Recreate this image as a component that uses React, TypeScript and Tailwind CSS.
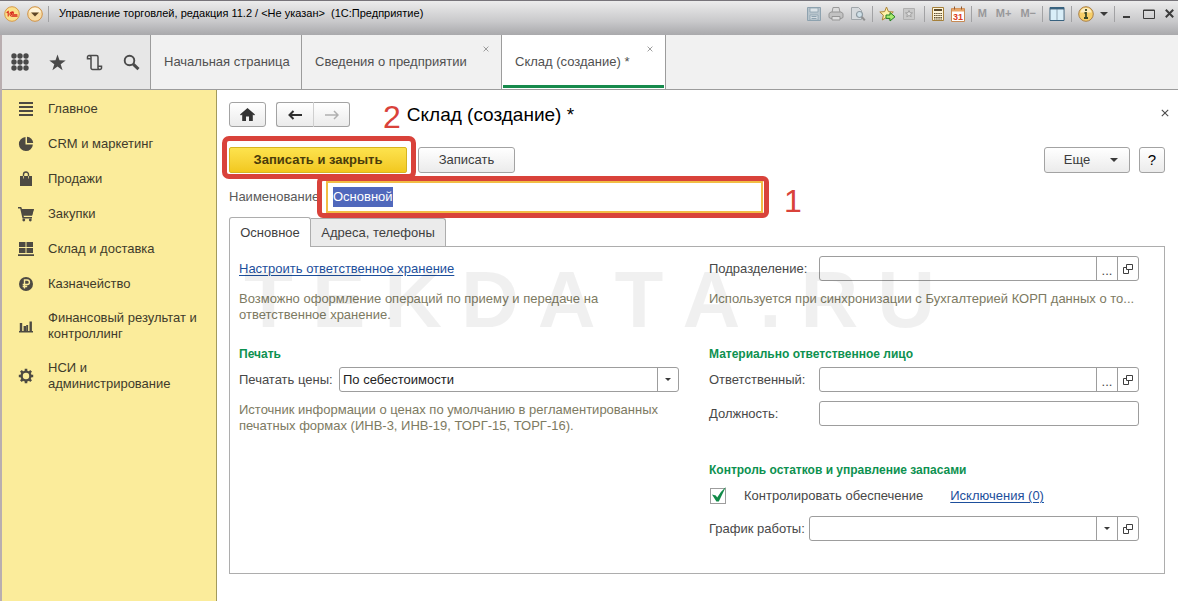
import { useEffect, useRef, type ReactNode } from "react";

/* ---------- title bar icons ---------- */

const LogoIcon = () => (
  <svg width="16" height="16" viewBox="0 0 16 16" aria-hidden="true">
    <circle cx="8" cy="8" r="7.3" fill="#fbe08a" stroke="#d79a4a" />
    <path d="M2.6 6.800 4.200 5.600v5M9.800 6.700A2.200 2.200 0 1 0 8.400 10.300h5.200M9.400 8a1 1 0 1 0-.9 .9h4.900" fill="none" stroke="#d8261c" strokeWidth="1.100" />
  </svg>
);

const MenuCircleIcon = () => (
  <svg width="16" height="16" viewBox="0 0 16 16" aria-hidden="true">
    <circle cx="8" cy="8" r="7.3" fill="#f9dca4" stroke="#cf9247" />
    <path d="M2 6.500a6.200 6.200 0 0 1 12 0z" fill="#fff3d8" />
    <path d="M4 6.500h8L8 10.500z" fill="#5d4526" />
  </svg>
);

const SaveIcon = () => (
  <svg width="16" height="16" viewBox="0 0 16 16" aria-hidden="true">
    <path d="M1.500 1.500h13v13h-13z" fill="#b7c4cc" stroke="#8ea2af" />
    <path d="M4 2h8v4H4z" fill="#dce3e7" stroke="#8ea2af" strokeWidth=".8" />
    <path d="M4 9h8v5H4z" fill="#d4dce1" stroke="#8ea2af" strokeWidth=".8" />
    <path d="M5.500 10.500h5M5.500 12.500h5" stroke="#8ea2af" />
  </svg>
);

const PrinterIcon = () => (
  <svg width="16" height="16" viewBox="0 0 16 16" aria-hidden="true">
    <path d="M4 6.500 5 1.500h6l1 5" fill="#dcdcdc" stroke="#9a9a9a" />
    <path d="M1 7.500 3 6h10l2 1.500v4l-2 1H3l-2-1z" fill="#c2c2c2" stroke="#959595" />
    <path d="M4 10.500h8v3.500H4z" fill="#dedede" stroke="#959595" />
  </svg>
);

const PreviewIcon = () => (
  <svg width="16" height="16" viewBox="0 0 16 16" aria-hidden="true">
    <path d="M1.500 1.500h7l3 3v9h-10z" fill="#d6dadd" stroke="#a0a6aa" />
    <circle cx="9.500" cy="8.500" r="3" fill="#cfe0e8" stroke="#8f9ba3" strokeWidth="1.200" />
    <path d="m11.800 10.800 3 3.600" stroke="#8f8f8f" strokeWidth="2" />
  </svg>
);

const StarGoIcon = () => (
  <svg width="17" height="16" viewBox="0 0 17 16" aria-hidden="true">
    <path d="m7.500 1 1.900 4.600 4.900.4-3.700 3.200 1.200 4.800-4.300-2.600-4.200 2.600 1.100-4.800L.8 6l4.900-.4z" fill="#fff1a8" stroke="#ad8435" />
    <path d="M7 9h4V6.500l5 4.300-5 4.200v-2.600H7z" fill="#a9ec6e" stroke="#247e25" />
  </svg>
);

const LinkDimIcon = () => (
  <svg width="14" height="16" viewBox="0 0 14 16" aria-hidden="true">
    <path d="M1.500 2.500h11v11h-11z" fill="#c9c9c9" stroke="#b0b0b0" />
    <path d="m7 4.500 1 2.200 2.500.2-1.900 1.500.6 2.400L7 9.500l-2.200 1.300.6-2.400-1.900-1.500 2.500-.2z" fill="#ddd" stroke="#a2a2a2" />
  </svg>
);

const CalculatorIcon = () => (
  <svg width="14" height="16" viewBox="0 0 14 16" aria-hidden="true">
    <path d="M1.500 1.500h11v13h-11z" fill="#fff5d8" stroke="#a5803b" />
    <path d="M3 4h8" stroke="#5a4a2c" strokeWidth="2" />
    <path d="M3 7.500h8M3 9.500h8M3 11.500h8M3 13h8" stroke="#5a4a2c" strokeDasharray="1.500 .65" />
  </svg>
);

const CalendarIcon = () => (
  <svg width="14" height="16" viewBox="0 0 14 16" aria-hidden="true">
    <path d="M.5 2.500h13v13H.5z" fill="#fff" stroke="#c78a54" />
    <path d="M1 2.500h12v3H1z" fill="#e9a567" />
    <path d="M3.500.5v3M10.500.5v3" stroke="#8f5a33" />
    <text x="7" y="14" textAnchor="middle" fontSize="9" fontWeight="700" fontFamily="Liberation Sans, sans-serif" fill="#dd3b21">31</text>
  </svg>
);

const PanelsIcon = () => (
  <svg width="16" height="16" viewBox="0 0 16 16" aria-hidden="true">
    <path d="M1 1.500h14v13H1z" fill="#fff" stroke="#38627f" />
    <path d="M1 2.500h14" stroke="#38627f" strokeWidth="2" />
    <path d="M2 4h5v10H2zM9 4h5v10H9z" fill="#d9eef8" />
    <path d="M8 3v11" stroke="#6b93ab" />
  </svg>
);

const InfoIcon = () => (
  <svg width="16" height="16" viewBox="0 0 16 16" aria-hidden="true">
    <circle cx="8" cy="8" r="7.300" fill="#f7cf6a" stroke="#a9804a" />
    <path d="M2.200 6.500a6 6 0 0 1 11.600 0z" fill="#fdedc0" />
    <path d="M8 3v2M6.500 7H8v5M6 12h4" stroke="#3c4a2a" strokeWidth="1.800" fill="none" />
  </svg>
);

/* ---------- section icons ---------- */

const ink = "#4d4a42";

const sectionIcons = {
  list: <path d="M1 2h14M1 6h14M1 10h14M1 14h14" stroke={ink} strokeWidth="2" />,
  pie: (
    <g fill={ink}>
      <path d="M7.500 1.100A7 7 0 1 0 14.900 8.500H7.500z" />
      <path d="M9 .8A6.500 6.500 0 0 1 15.200 7H9z" />
    </g>
  ),
  bag: (
    <g>
      <path d="M2 5h12v10H2z" fill={ink} />
      <path d="M5.500 7V3.500a2.500 2.500 0 0 1 5 0V7" fill="none" stroke={ink} strokeWidth="1.400" />
      <path d="M5.500 5v2.500M10.500 5v2.500" stroke="#fbec9b" strokeWidth=".7" />
    </g>
  ),
  cart: (
    <g>
      <path d="M0 1h3.200l.8 2h12l-1.800 6.500H5.400L6 11h8v1.600H4.500L2.200 2.600H0z" fill={ink} />
      <path d="M3.500 3h12.200L14 9.500H5z" fill={ink} />
      <circle cx="5.800" cy="14" r="1.400" fill={ink} />
      <circle cx="12.300" cy="14" r="1.400" fill={ink} />
    </g>
  ),
  boxes: <path d="M1 1h6.500v5H1zM8.500 1H15v5H8.500zM1 7h6.500v5H1zM8.500 7H15v5H8.500zM0 13.200h16V15H0z" fill={ink} />,
  ruble: (
    <g>
      <circle cx="8" cy="8" r="7" fill={ink} />
      <path d="M6.500 12.500V4h2.700a2.200 2.200 0 0 1 0 4.500H4.700M4.700 10.500h4.500" fill="none" stroke="#fbec9b" strokeWidth="1.400" />
    </g>
  ),
  bars: <path d="M1 13h14v1.500H1zM1.800 5h2.400v8H1.800zM5.600 8h2.400v5H5.600zM8.200 7h1.900v6H8.200zM11.500 3.500h2.400V13h-2.400z" fill={ink} />,
  gear: (
    <g fill="none" stroke={ink}>
      <circle cx="8" cy="8" r="4.400" strokeWidth="2.400" />
      <path d="M8 .8v2.400M8 12.800v2.400M.8 8h2.400M12.800 8h2.400M2.900 2.900l1.700 1.700M11.400 11.400l1.700 1.700M2.900 13.100l1.700-1.700M11.400 4.600l1.700-1.700" strokeWidth="2.600" />
    </g>
  ),
};

const sections: { icon: keyof typeof sectionIcons; label: string }[] = [
  { icon: "list", label: "Главное" },
  { icon: "pie", label: "CRM и маркетинг" },
  { icon: "bag", label: "Продажи" },
  { icon: "cart", label: "Закупки" },
  { icon: "boxes", label: "Склад и доставка" },
  { icon: "ruble", label: "Казначейство" },
  { icon: "bars", label: "Финансовый результат и контроллинг" },
  { icon: "gear", label: "НСИ и администрирование" },
];

/* ---------- small parts ---------- */

const Divider = () => <span className="h-4 w-px bg-[#a2a2a4]" />;

const Cross = ({ size }: { size: number }) => (
  <svg width={size} height={size} viewBox="0 0 8 8" aria-hidden="true">
    <path d="m.8.8 6.400 6.400M7.200.8.8 7.200" stroke="currentColor" strokeWidth="1.100" />
  </svg>
);

const Caret = ({ width }: { width: number }) => (
  <svg width={width} height={width / 2} viewBox="0 0 8 4" aria-hidden="true">
    <path d="M0 0h8L4 4z" fill="#3a3a3a" />
  </svg>
);

const OpenIcon = () => (
  <svg width="10" height="10" viewBox="0 0 10 10" aria-hidden="true">
    <path d="M3.500.5h6v5h-6zM3.500 3.500h-3v6h5v-4" fill="none" stroke="#3f3f3f" />
  </svg>
);

const plainButton =
  "flex items-center justify-center rounded-[3px] border border-[#a3a3a3] bg-linear-to-b from-white to-[#ebebeb] text-[#3c3c3c]";
const fieldBox = "flex h-[25px] min-w-0 flex-1 items-stretch overflow-hidden rounded-[3px] border border-[#9d9d9d] bg-white";
const fieldButton = "flex w-[21px] shrink-0 items-center justify-center border-l border-[#9d9d9d]";
const hint = "leading-4 text-[#7d7a62]";

function Field({ id, label, labelClass, children }: { id: string; label: string; labelClass: string; children?: ReactNode }) {
  return (
    <div className="flex items-center">
      <label htmlFor={id} className={labelClass}>
        {label}
      </label>
      <div className={fieldBox}>
        <input id={id} type="text" className="min-w-0 flex-1 px-1 outline-none" />
        {children}
      </div>
    </div>
  );
}

const PickButton = () => (
  <button type="button" aria-label="Выбрать" className={fieldButton + " pt-1"}>
    ...
  </button>
);

const OpenButton = () => (
  <button type="button" aria-label="Открыть" className={fieldButton}>
    <OpenIcon />
  </button>
);

const GroupTitle = ({ children }: { children: ReactNode }) => (
  <h2 className="text-[12px] leading-4 font-bold text-[#0d9150]">{children}</h2>
);

/* ---------- page regions ---------- */

function TitleBar() {
  return (
    <header className="flex h-[35px] items-start border-t border-[#77747a] bg-linear-to-b from-[#ececec] via-[#c9c9cb] via-60% to-[#a9a9ac] px-1 pt-1">
      <div className="flex h-[17px] flex-1 items-center">
        <LogoIcon />
        <span className="w-[7px]" />
        <MenuCircleIcon />
        <span className="w-[5px]" />
        <Divider />
        <h1 className="ml-[10px] text-[11px] whitespace-pre text-black">
          {"Управление торговлей, редакция 11.2 / <Не указан>  (1С:Предприятие)"}
        </h1>
      </div>
      <div className="flex h-[17px] items-center text-[11px] font-bold text-[#98989a]">
        <div className="flex items-center gap-[6px]">
          <SaveIcon />
          <PrinterIcon />
          <PreviewIcon />
          <Divider />
          <StarGoIcon />
          <LinkDimIcon />
        </div>
        <div className="ml-2 flex items-center gap-[6px]">
          <Divider />
          <CalculatorIcon />
          <CalendarIcon />
          <Divider />
        </div>
        <div className="ml-[6px] flex items-center gap-[9px]">
          <span>M</span>
          <span>M+</span>
          <span>M−</span>
        </div>
        <div className="ml-[6px] flex items-center gap-[6px]">
          <Divider />
          <PanelsIcon />
          <Divider />
          <InfoIcon />
          <Caret width={8} />
          <Divider />
        </div>
        <div className="ml-2 flex items-center text-[#3b3b3b]">
          <button type="button" aria-label="Свернуть">
            <svg width="8" height="10" viewBox="0 0 8 10"><path d="M0 8h7" stroke="currentColor" strokeWidth="2" /></svg>
          </button>
          <button type="button" aria-label="Развернуть" className="ml-3">
            <svg width="12" height="10" viewBox="0 0 12 10"><path d="M.5 1h11v8.500H.5zM.5 1.500h11" fill="none" stroke="currentColor" /></svg>
          </button>
          <button type="button" aria-label="Закрыть" className="ml-[10px]">
            <svg width="9" height="9" viewBox="0 0 9 9"><path d="m.8.8 7.400 7.400M8.200.8.8 8.200" stroke="currentColor" strokeWidth="2" /></svg>
          </button>
        </div>
      </div>
    </header>
  );
}

function TabBar() {
  return (
    <nav className="flex h-[55px] items-stretch border-b border-[#9c9c9c] bg-[#f1f1f1] text-[#505050]">
      <div className="flex w-[149px] items-center border-r border-[#9c9c9c] bg-[#e7e7e7] pl-[9px] text-[#4a4a4a]">
        <button type="button" aria-label="Меню">
          <svg width="18" height="18" viewBox="0 0 18 18" fill="currentColor">
            {[3, 9, 15].map((y) => [3, 9, 15].map((x) => <circle key={x + "-" + y} cx={x} cy={y} r="2.700" />))}
          </svg>
        </button>
        <button type="button" aria-label="Избранное" className="ml-5">
          <svg width="17" height="17" viewBox="0 0 17 17" fill="currentColor">
            <path d="m8.500.5 2 5.800 6.200.1-5 3.800 1.900 6-5.100-3.600-5.100 3.600 1.900-6-5-3.800 6.200-.1z" />
          </svg>
        </button>
        <button type="button" aria-label="История" className="ml-5">
          <svg width="17" height="17" viewBox="0 0 17 17" fill="none" stroke="currentColor" strokeWidth="1.500">
            <path d="M4.200 4.800H1.500V3a1.500 1.500 0 0 1 1.500-1.500h7.500a1.500 1.500 0 0 1 1.500 1.500v9.200h3.500V14a1.500 1.500 0 0 1-1.500 1.500H6.500A1.500 1.500 0 0 1 5 14V3a1.300 1.300 0 0 0-2-1M12 12.200V14a1.500 1.500 0 0 0 1.500 1.500" />
          </svg>
        </button>
        <button type="button" aria-label="Поиск" className="ml-5">
          <svg width="17" height="17" viewBox="0 0 17 17" fill="none" stroke="currentColor">
            <circle cx="6.500" cy="6.500" r="4.800" strokeWidth="1.900" />
            <path d="m10.200 10.200 5.300 5" strokeWidth="3" />
          </svg>
        </button>
      </div>
      <div className="flex w-[151px] items-center border-r border-[#9c9c9c] pl-[13px]">
        <a href="#home">Начальная страница</a>
      </div>
      <div className="relative flex w-[200px] items-center border-r border-[#9c9c9c] pl-[13px]">
        <a href="#company">Сведения о предприятии</a>
        <button type="button" aria-label="Закрыть вкладку" className="absolute top-[11px] right-3 text-[#8b8b8b]">
          <Cross size={6} />
        </button>
      </div>
      <div className="relative flex w-[164px] items-center border-r border-[#9c9c9c] bg-white pl-[13px]">
        <a href="#warehouse" aria-current="page">Склад (создание) *</a>
        <button type="button" aria-label="Закрыть вкладку" className="absolute top-[11px] right-3 text-[#8b8b8b]">
          <Cross size={6} />
        </button>
        <span className="absolute inset-x-px bottom-px h-[3px] bg-[#178a4c]" />
      </div>
    </nav>
  );
}

function Sidebar() {
  return (
    <aside className="w-[215px] shrink-0 border-r border-[#a39a5c] bg-[#fbec9b] pt-px">
      <ul>
        {sections.map((s) => (
          <li key={s.icon}>
            <a href={"#" + s.icon} className="flex min-h-[35px] items-center py-[9px] pr-4 pl-4 leading-4 text-[#3f3b2b]">
              <svg width="16" height="16" viewBox="0 0 16 16" className="mr-[14px] shrink-0" aria-hidden="true">
                {sectionIcons[s.icon]}
              </svg>
              <span>{s.label}</span>
            </a>
          </li>
        ))}
      </ul>
    </aside>
  );
}

function Watermark() {
  return (
    <div
      aria-hidden="true"
      className="pointer-events-none absolute top-4 left-[14px] flex gap-[19px] text-[80px] leading-[74px] font-bold text-black/6"
    >
      {Array.from("TEKDATA.RU").map((c, i) => (
        <span key={i}>{c}</span>
      ))}
    </div>
  );
}

function MainPanel() {
  return (
    <section className="relative grid grid-cols-[440fr_430fr] gap-x-[30px] border border-[#adadad] pt-[9px] pr-[25px] pb-8 pl-[9px] text-[#484848]">
      <div className="min-w-0">
        <div className="flex h-[25px] items-center">
          <a href="#storage" className="text-[#1d4f9c] underline underline-offset-2">Настроить ответственное хранение</a>
        </div>
        <p className={"mt-[10px] min-h-8 max-w-[380px] " + hint}>
          Возможно оформление операций по приему и передаче на ответственное хранение.
        </p>
        <div className="mt-[23px] flex flex-col gap-[5px]">
          <GroupTitle>Печать</GroupTitle>
          <div className="flex items-center">
            <label htmlFor="price" className="w-[100px] shrink-0">Печатать цены:</label>
            <div className={fieldBox + " relative"}>
              <select id="price" className="min-w-0 flex-1 appearance-none px-[3px] text-[#222] outline-none">
                <option>По себестоимости</option>
              </select>
              <span className="pointer-events-none absolute inset-y-0 right-0 flex w-[21px] items-center justify-center border-l border-[#9d9d9d]">
                <Caret width={6} />
              </span>
            </div>
          </div>
        </div>
        <p className={"mt-[10px] " + hint}>
          Источник информации о ценах по умолчанию в регламентированных печатных формах (ИНВ-3, ИНВ-19, ТОРГ-15, ТОРГ-16).
        </p>
      </div>

      <div className="min-w-0">
        <Field id="division" label="Подразделение:" labelClass="w-[110px] shrink-0">
          <PickButton />
          <OpenButton />
        </Field>
        <div className={"mt-[10px] min-h-8 " + hint}>
          <p>Используется при синхронизации с Бухгалтерией КОРП данных о то...</p>
        </div>
        <div className="mt-[23px] flex flex-col gap-[5px]">
          <GroupTitle>Материально ответственное лицо</GroupTitle>
          <Field id="responsible" label="Ответственный:" labelClass="w-[110px] shrink-0">
            <PickButton />
            <OpenButton />
          </Field>
        </div>
        <div className="mt-[9px]">
          <Field id="position" label="Должность:" labelClass="w-[110px] shrink-0" />
        </div>
        <div className="mt-9 flex flex-col gap-[5px]">
          <GroupTitle>Контроль остатков и управление запасами</GroupTitle>
          <div className="flex h-[25px] items-center">
            <label className="relative flex items-center gap-[18px] pl-px">
              <input type="checkbox" defaultChecked className="peer size-4 appearance-none border border-[#9d9d9d] bg-white" />
              <svg width="16" height="16" viewBox="0 0 16 16" className="pointer-events-none absolute left-px hidden overflow-visible peer-checked:block" aria-hidden="true">
                <path d="M2 6.500 5.800 7.600 7.200 9.600Q10.500 3.500 15.800-1L8.800 13.400H6.400z" fill="#118a48" />
              </svg>
              Контролировать обеспечение
            </label>
            <a href="#exceptions" className="ml-[27px] text-[#1d4f9c] underline underline-offset-2">Исключения (0)</a>
          </div>
        </div>
        <div className="mt-2">
          <Field id="schedule" label="График работы:" labelClass="w-[100px] shrink-0">
            <button type="button" aria-label="Показать список" className={fieldButton}>
              <Caret width={6} />
            </button>
            <OpenButton />
          </Field>
        </div>
      </div>
      <Watermark />
    </section>
  );
}

function WarehouseForm() {
  const nameRef = useRef<HTMLInputElement>(null);
  useEffect(() => {
    nameRef.current?.focus();
    nameRef.current?.select();
  }, []);

  return (
    <main className="min-w-0 flex-1 bg-white pt-3 pr-[13px] pb-[27px] pl-3">
      <div className="flex h-[25px] items-center">
        <button type="button" aria-label="Домой" className={plainButton + " h-full w-[37px]"}>
          <svg width="15" height="13" viewBox="0 0 15 13"><path d="M7.500 0 15 6.500 14 7.500 12.800 6.500V13H9V8.500H6V13H2.200V6.500L1 7.500 0 6.500z" fill="#333" /></svg>
        </button>
        <div className="ml-[10px] flex h-full">
          <button type="button" aria-label="Назад" className={plainButton + " w-[38px] rounded-r-none border-r-[#cfcfcf]"}>
            <svg width="14" height="10" viewBox="0 0 14 10"><path d="M14 5H2M5.500 1 1.500 5l4 4" fill="none" stroke="#2f2f2f" strokeWidth="2" /></svg>
          </button>
          <button type="button" aria-label="Вперед" className={plainButton + " w-9 rounded-l-none border-l-0"}>
            <svg width="14" height="10" viewBox="0 0 14 10"><path d="M0 5h12M9 1l4 4-4 4" fill="none" stroke="#b0b0b0" strokeWidth="1.500" /></svg>
          </button>
        </div>
        <span className="ml-[33px] pt-1 text-[32px] leading-none text-[#d9423a]">2</span>
        <h2 className="ml-[6px] pt-px text-[19px] text-black">Склад (создание) *</h2>
        <button type="button" aria-label="Закрыть форму" className="mr-[-4px] mb-1 ml-auto text-[#4a4a4a]">
          <Cross size={8} />
        </button>
      </div>

      <div className="mt-5 flex h-[26px] items-stretch">
        <div className="relative flex">
          <button type="button" className="w-[178px] rounded-[2px] border border-[#d6b520] bg-linear-to-b from-[#fde34d] to-[#f2c81d] font-bold text-[#4a3c0a]">
            Записать и закрыть
          </button>
          <span className="pointer-events-none absolute -top-[11px] -right-[9px] -bottom-[6px] -left-[7px] rounded-[7px] border-5 border-[#d9423a]" />
        </div>
        <button type="button" className={plainButton + " ml-[11px] w-[97px]"}>Записать</button>
        <button type="button" className={plainButton + " ml-auto w-[86px] pl-2"}>
          <span>Еще</span>
          <span className="ml-5"><Caret width={8} /></span>
        </button>
        <button type="button" aria-label="Справка" className={plainButton + " ml-[9px] w-[26px] text-[15px] text-black"}>?</button>
      </div>

      <div className="mt-2 flex h-8 items-center">
        <label htmlFor="name" className="w-[97px] shrink-0 text-[#5a5a5a]">Наименование:</label>
        <div className="relative flex w-[437px] self-stretch">
          <input
            id="name"
            ref={nameRef}
            type="text"
            defaultValue="Основной"
            className="min-w-0 flex-1 border-2 border-[#f2bd45] bg-white px-[5px] outline-none selection:bg-[#5068bc] selection:text-white"
          />
          <span className="pointer-events-none absolute -top-[5px] -right-[6px] -bottom-[5px] -left-[9px] rounded-[6px] border-5 border-[#d9423a]" />
        </div>
        <span className="ml-[21px] pt-2 text-[32px] leading-none text-[#d9423a]">1</span>
      </div>

      <div className="mt-1 flex items-end text-[#3f3f3f]">
        <button type="button" className="relative z-10 -mb-px h-[30px] w-[82px] rounded-t-[3px] border border-b-0 border-[#adadad] bg-white">Основное</button>
        <button type="button" className="h-7 w-[135px] rounded-tr-[3px] border border-b-0 border-l-0 border-[#adadad] bg-[#ebebeb]">Адреса, телефоны</button>
      </div>
      <MainPanel />
    </main>
  );
}

export default function App() {
  return (
    <div className="flex min-h-screen flex-col bg-white font-['Liberation_Sans',Arial,sans-serif] text-[13px]">
      <TitleBar />
      <div className="flex flex-1 flex-col border-l-2 border-[#b9aeb0]">
        <TabBar />
        <div className="flex flex-1">
          <Sidebar />
          <WarehouseForm />
        </div>
      </div>
    </div>
  );
}
